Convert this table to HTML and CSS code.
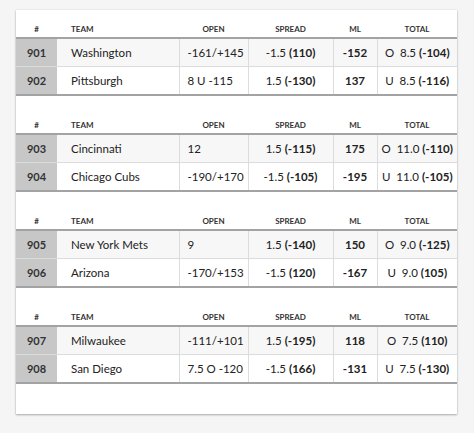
FILE: index.html
```html
<!DOCTYPE html>
<html>
<head>
<meta charset="utf-8">
<link rel="stylesheet" href="styles.css">
</head>
<body>
<div class="card">
  <table class="odds">
    <colgroup><col class="c-num"><col class="c-team"><col class="c-open"><col class="c-spread"><col class="c-ml"><col class="c-total"></colgroup>
    <thead><tr><th>#</th><th class="left">TEAM</th><th>OPEN</th><th>SPREAD</th><th>ML</th><th>TOTAL</th></tr></thead>
    <tbody>
      <tr><td class="num">901</td><td class="team">Washington</td><td class="open">-161/+145</td><td class="spread">-1.5 <b>(110)</b></td><td class="ml">-152</td><td class="total">O&nbsp; 8.5 <b>(-104)</b></td></tr>
      <tr><td class="num">902</td><td class="team">Pittsburgh</td><td class="open">8 U -115</td><td class="spread">1.5 <b>(-130)</b></td><td class="ml">137</td><td class="total">U&nbsp; 8.5 <b>(-116)</b></td></tr>
    </tbody>
  </table>
  <table class="odds">
    <colgroup><col class="c-num"><col class="c-team"><col class="c-open"><col class="c-spread"><col class="c-ml"><col class="c-total"></colgroup>
    <thead><tr><th>#</th><th class="left">TEAM</th><th>OPEN</th><th>SPREAD</th><th>ML</th><th>TOTAL</th></tr></thead>
    <tbody>
      <tr><td class="num">903</td><td class="team">Cincinnati</td><td class="open">12</td><td class="spread">1.5 <b>(-115)</b></td><td class="ml">175</td><td class="total">O&nbsp; 11.0 <b>(-110)</b></td></tr>
      <tr><td class="num">904</td><td class="team">Chicago Cubs</td><td class="open">-190/+170</td><td class="spread">-1.5 <b>(-105)</b></td><td class="ml">-195</td><td class="total">U&nbsp; 11.0 <b>(-105)</b></td></tr>
    </tbody>
  </table>
  <table class="odds">
    <colgroup><col class="c-num"><col class="c-team"><col class="c-open"><col class="c-spread"><col class="c-ml"><col class="c-total"></colgroup>
    <thead><tr><th>#</th><th class="left">TEAM</th><th>OPEN</th><th>SPREAD</th><th>ML</th><th>TOTAL</th></tr></thead>
    <tbody>
      <tr><td class="num">905</td><td class="team">New York Mets</td><td class="open">9</td><td class="spread">1.5 <b>(-140)</b></td><td class="ml">150</td><td class="total">O&nbsp; 9.0 <b>(-125)</b></td></tr>
      <tr><td class="num">906</td><td class="team">Arizona</td><td class="open">-170/+153</td><td class="spread">-1.5 <b>(120)</b></td><td class="ml">-167</td><td class="total">U&nbsp; 9.0 <b>(105)</b></td></tr>
    </tbody>
  </table>
  <table class="odds">
    <colgroup><col class="c-num"><col class="c-team"><col class="c-open"><col class="c-spread"><col class="c-ml"><col class="c-total"></colgroup>
    <thead><tr><th>#</th><th class="left">TEAM</th><th>OPEN</th><th>SPREAD</th><th>ML</th><th>TOTAL</th></tr></thead>
    <tbody>
      <tr><td class="num">907</td><td class="team">Milwaukee</td><td class="open">-111/+101</td><td class="spread">1.5 <b>(-195)</b></td><td class="ml">118</td><td class="total">O&nbsp; 7.5 <b>(110)</b></td></tr>
      <tr><td class="num">908</td><td class="team">San Diego</td><td class="open">7.5 O -120</td><td class="spread">-1.5 <b>(166)</b></td><td class="ml">-131</td><td class="total">U&nbsp; 7.5 <b>(-130)</b></td></tr>
    </tbody>
  </table>
</div>
</body>
</html>
```
FILE: styles.css
```css
html, body {
  margin: 0;
  padding: 0;
  background: #f5f5f5;
}
body {
  font-family: Lato, "Open Sans", sans-serif;
  color: #222;
  padding: 10px 0 19px 16px;
}
.card {
  width: 441px;
  background: #fff;
  padding: 11px 0 30px 0;
  box-shadow: 0 1px 2px rgba(0,0,0,0.3), 0 0 1px rgba(0,0,0,0.15);
}
.odds {
  width: 441px;
  border-collapse: collapse;
  table-layout: fixed;
  margin-bottom: 21px;
}
.odds:last-child { margin-bottom: 0; }
.c-num { width: 41px; }
.c-team { width: 122px; }
.c-open { width: 69px; }
.c-spread { width: 85px; }
.c-ml { width: 44px; }
.c-total { width: 80px; }
.odds th {
  height: 16px;
  padding: 0;
  font-size: 8px;
  font-weight: 700;
  color: #333;
  text-align: center;
  border-bottom: 2px solid #a3a3a3;
  vertical-align: middle;
}
.odds th.left { text-align: left; padding-left: 14px; }
.odds td {
  height: 27px;
  padding: 0;
  font-size: 11.5px;
  vertical-align: middle;
  text-align: center;
  border-bottom: 1px solid #dcdcdc;
  border-left: 1px solid #dcdcdc;
  white-space: nowrap;
}
.odds tbody tr:first-child td { background: #f7f7f7; }
.odds tbody tr:last-child td { border-bottom: 2px solid #a3a3a3; }
.odds td.num {
  background: #c7c7c7 !important;
  font-size: 11px;
  font-weight: 700;
  border-left: none;
  color: #333;
}
.odds td.team {
  text-align: left;
  padding-left: 14px;
  border-left: none;
}
.odds td.open { text-align: left; padding-left: 8px; }
.odds td.ml { font-weight: 700; }
.odds b { font-weight: 700; }
```
